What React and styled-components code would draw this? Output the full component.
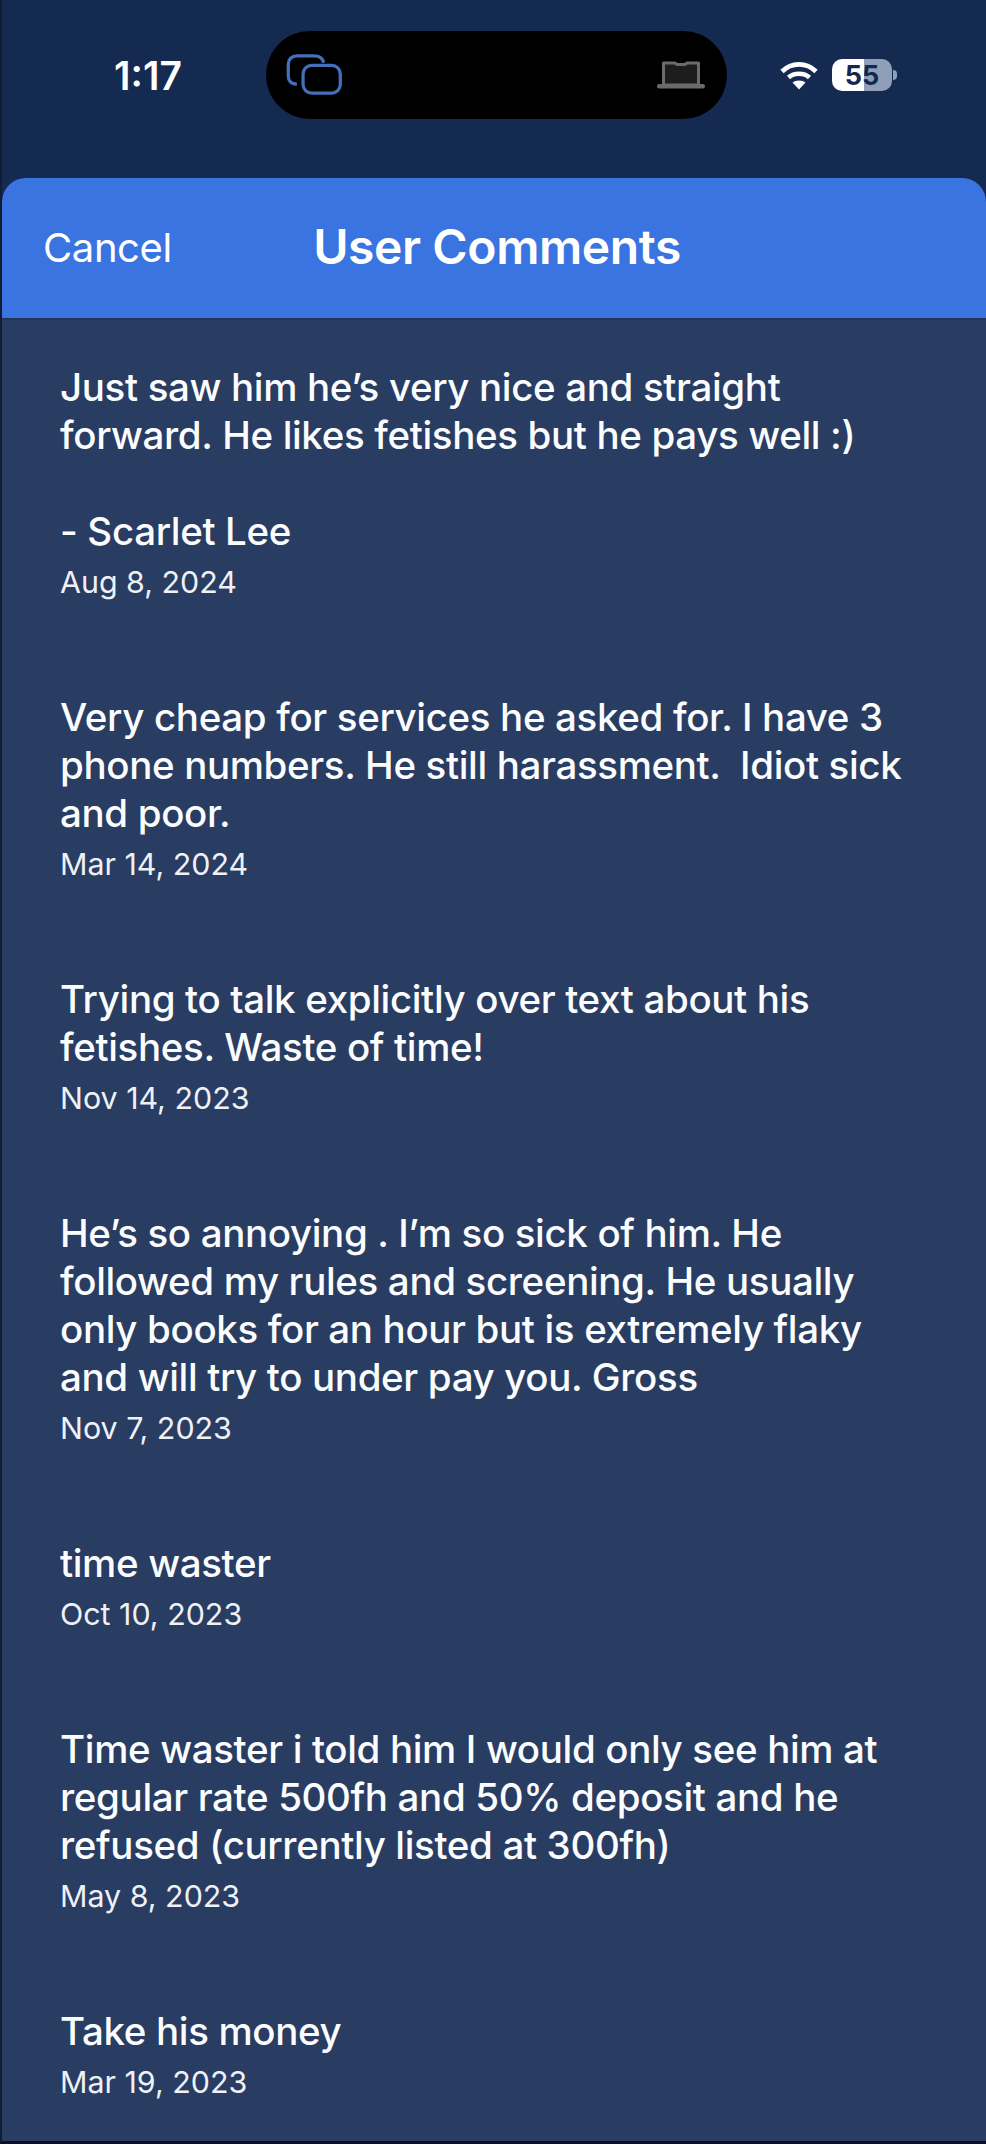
import React from "react";
import styled, { createGlobalStyle } from "styled-components";

const GlobalStyle = createGlobalStyle`
    html, body {
        margin: 0;
        padding: 0;
        background: #0b1426;
    }
    * {
        box-sizing: border-box;
    }
`;

const Screen = styled.div`
    width: 986px;
    height: 2144px;
    overflow: hidden;
    display: flex;
    flex-direction: column;
    border-left: 2px solid #101d35;
    border-bottom: 3px solid #0a1120;
    background: linear-gradient(180deg, #142a51 0%, #15294b 100%);
    font-family: Inter, "Liberation Sans", sans-serif;
    color: #fff;
`;

const StatusBar = styled.div`
    height: 176px;
    flex: none;
    padding-top: 31px;
    display: flex;
    align-items: flex-start;
    margin-bottom: 2px;
`;

const Time = styled.div`
    width: 264px;
    height: 88px;
    padding-left: 112px;
    display: flex;
    align-items: center;
    font-size: 39px;
    font-weight: 600;
`;

const Island = styled.div`
    width: 461px;
    height: 88px;
    border-radius: 44px;
    background: #000;
    display: flex;
    align-items: center;
    justify-content: space-between;
    padding: 0 22px 0 20px;
`;

const StatusRight = styled.div`
    height: 88px;
    margin-left: 53px;
    display: flex;
    align-items: center;
    gap: 14px;
`;

const Battery = styled.div`
    width: 60px;
    height: 32px;
    border-radius: 10px;
    background: linear-gradient(90deg, #fff 0%, #fff 53%, #8f9fb8 53%, #8f9fb8 100%);
    color: #14294e;
    font-size: 27px;
    font-weight: 700;
    display: flex;
    align-items: center;
    justify-content: center;
    position: relative;
    &::after {
        content: "";
        position: absolute;
        right: -5px;
        top: 11px;
        width: 4px;
        height: 10px;
        border-radius: 0 4px 4px 0;
        background: #8f9fb8;
    }
`;

const Sheet = styled.div`
    flex: 1;
    display: flex;
    flex-direction: column;
    background: #293c62;
    border-radius: 24px 24px 0 0;
    overflow: hidden;
`;

const Header = styled.div`
    height: 140px;
    flex: none;
    background: #3a74e0;
    display: grid;
    grid-template-columns: 1fr auto 1fr;
    align-items: center;
    padding: 0 41px 3px;
    box-shadow: 0 1px 2px rgba(15, 30, 60, 0.5);
`;

const Cancel = styled.div`
    font-size: 40px;
    font-weight: 400;
    letter-spacing: -0.4px;
    padding-top: 2px;
`;

const Title = styled.div`
    font-size: 48px;
    font-weight: 600;
    letter-spacing: -0.4px;
    margin-left: 6px;
`;

const List = styled.div`
    padding: 45px 70px 0 58px;
    display: flex;
    flex-direction: column;
    gap: 91px;
`;

const Comment = styled.div`
    display: flex;
    flex-direction: column;
    gap: 7px;
`;

const Body = styled.div`
    font-size: 38.5px;
    line-height: 48px;
    font-weight: 500;
    letter-spacing: -0.35px;
    white-space: pre-wrap;
    color: #fbfcfe;
`;

const DateLine = styled.div`
    font-size: 30.4px;
    line-height: 40px;
    font-weight: 400;
    color: #eef1f6;
`;

const comments = [
    {
        text: "Just saw him he’s very nice and straight forward. He likes fetishes but he pays well :)\n\n- Scarlet Lee",
        date: "Aug 8, 2024",
    },
    {
        text: "Very cheap for services he asked for. I have 3 phone numbers. He still harassment.  Idiot sick and poor.",
        date: "Mar 14, 2024",
    },
    {
        text: "Trying to talk explicitly over text about his fetishes. Waste of time!",
        date: "Nov 14, 2023",
    },
    {
        text: "He’s so annoying . I’m so sick of him. He followed my rules and screening. He usually only books for an hour but is extremely flaky and will try to under pay you. Gross",
        date: "Nov 7, 2023",
    },
    { text: "time waster", date: "Oct 10, 2023" },
    {
        text: "Time waster i told him I would only see him at regular rate 500fh and 50% deposit and he refused (currently listed at 300fh)",
        date: "May 8, 2023",
    },
    { text: "Take his money", date: "Mar 19, 2023" },
];

function StackIcon() {
    return (
        <svg width="58" height="42" viewBox="0 0 60 44" fill="none" stroke="#4470bb" strokeWidth="3.4">
            <path d="M11 31.5 C5 31.5 2 28 2 23 V11 C2 5.5 5.5 2 11 2 H29 C34 2 38 4.5 39 9" />
            <rect x="17.5" y="12" width="39" height="29" rx="9" />
        </svg>
    );
}

function LaptopIcon() {
    return (
        <svg width="48" height="28" viewBox="0 0 48 28" fill="none">
            <path d="M6.5 2 H18 L20 3.5 H28 L30 2 H41.5 V24 H6.5 Z" fill="#1d1d1e" stroke="#6b6b6c" strokeWidth="3" strokeLinejoin="round" />
            <rect x="0" y="23" width="48" height="4.5" rx="2.2" fill="#6b6b6c" />
        </svg>
    );
}

function WifiIcon() {
    return (
        <svg width="38" height="29" viewBox="0 0 38 29" fill="none" stroke="#fff" strokeWidth="4.6">
            <path d="M2 10.5 C11.5 1 26.5 1 36 10.5" />
            <path d="M8.5 16.5 C14 11.5 24 11.5 29.5 16.5" />
            <path d="M19 28.5 L12.5 21.5 C15.5 18.8 22.5 18.8 25.5 21.5 Z" fill="#fff" stroke="none" />
        </svg>
    );
}

export default function App() {
    return (
        <>
            <GlobalStyle />
            <Screen>
                <StatusBar>
                    <Time>1:17</Time>
                    <Island>
                        <StackIcon />
                        <LaptopIcon />
                    </Island>
                    <StatusRight>
                        <WifiIcon />
                        <Battery>55</Battery>
                    </StatusRight>
                </StatusBar>
                <Sheet>
                    <Header>
                        <Cancel>Cancel</Cancel>
                        <Title>User Comments</Title>
                    </Header>
                    <List>
                        {comments.map((comment) => (
                            <Comment key={comment.date}>
                                <Body>{comment.text}</Body>
                                <DateLine>{comment.date}</DateLine>
                            </Comment>
                        ))}
                    </List>
                </Sheet>
            </Screen>
        </>
    );
}
